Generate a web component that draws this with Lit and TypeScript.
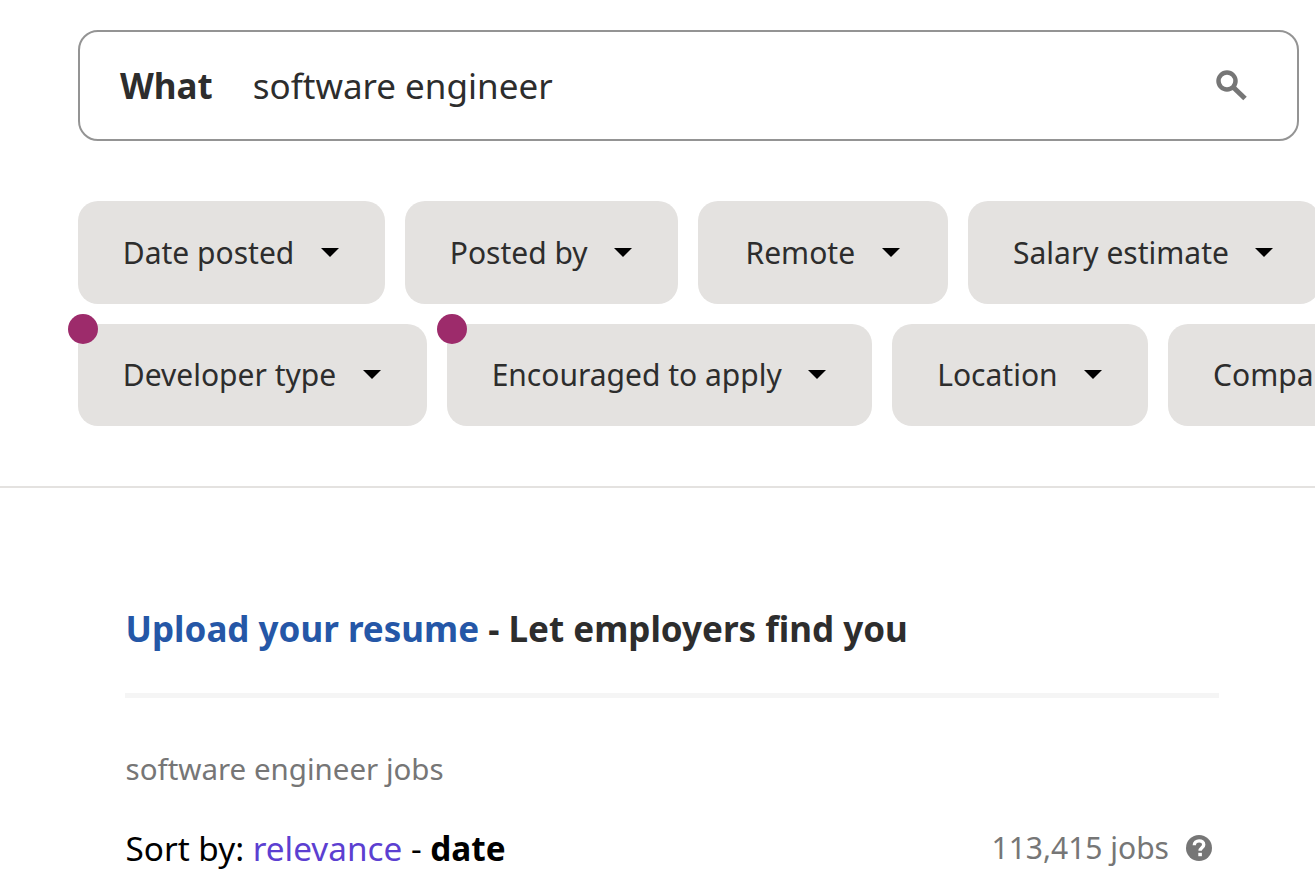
import { LitElement, html, css } from "lit";
import { customElement } from "lit/decorators.js";

const row1 = ["Date posted", "Posted by", "Remote", "Salary estimate"];
const row2: [string, boolean][] = [["Developer type", true], ["Encouraged to apply", true], ["Location", false], ["Company", false]];

@customElement("app-root")
export class AppRoot extends LitElement {
  static styles = css`
    :host { display: block; width: 1315px; height: 887px; overflow: hidden; background: #fff; font-family: "Noto Sans", sans-serif; color: #2d2d2d; }
    .top { padding: 30px 0 0 78px; height: 488px; box-sizing: border-box; border-bottom: 2px solid #e4e2e0; }
    .search { width: 1221px; height: 111px; box-sizing: border-box; border: 2px solid #949494; border-radius: 20px; display: flex; align-items: center; padding: 0 49px 0 40px; font-size: 35px; margin-bottom: 60px; }
    .what { font-weight: 700; margin-right: 40px; }
    .q { flex: 1; }
    .search svg { width: 32px; height: 32px; display: block; flex: none; }
    .rows { display: flex; flex-direction: column; gap: 20px; }
    .row { display: flex; gap: 20px; }
    .chip { position: relative; flex: none; height: 103px; min-width: 250px; box-sizing: border-box; padding: 0 46.200px 0 44.800px; background: #e4e2e0; border-radius: 20px; display: flex; align-items: center; justify-content: center; gap: 26.500px; font-size: 30px; white-space: nowrap; }
    .row + .row .chip { height: 102px; padding-bottom: 2px; }
    .caret { width: 0; height: 0; border-left: 9px solid transparent; border-right: 9px solid transparent; border-top: 9px solid #000; }
    .dot { position: absolute; left: -10px; top: -10px; width: 30px; height: 30px; border-radius: 50%; background: #9d2b6b; }
    .main { padding: 0 96px 0 125px; }
    .upload { font-size: 35px; font-weight: 700; line-height: 46px; padding: 118px 0 0 0.500px; }
    .upload a { color: #2557a7; }
    .rule { height: 5px; background: #f5f5f5; margin-top: 41px; }
    .title { font-size: 29.500px; color: #767676; line-height: 40px; margin-top: 51px; padding-left: 0.500px; }
    .sort { display: flex; justify-content: space-between; align-items: center; margin-top: 37px; padding-left: 0.500px; color: #000; font-size: 33.300px; line-height: 44px; }
    .sort a { color: #5c3fd1; }
    .count { display: flex; align-items: center; gap: 17px; color: #767676; font-size: 30px; padding-right: 7px; }
    .count svg { width: 26px; height: 26px; display: block; flex: none; }
  `;

  render() {
    return html`
      <div class="top">
        <div class="search">
          <span class="what">What</span>
          <span class="q">software engineer</span>
          <svg viewBox="0 0 32 32" fill="none" stroke="#767676"><circle cx="11" cy="11" r="8.500" stroke-width="4.500"/><path d="M17.500 17.500 29 28.500" stroke-width="5"/></svg>
        </div>
        <div class="rows">
          <div class="row">${row1.map((t) => html`<div class="chip">${t}<span class="caret"></span></div>`)}</div>
          <div class="row">${row2.map(([t, d]) => html`<div class="chip">${d ? html`<span class="dot"></span>` : ""}${t}<span class="caret"></span></div>`)}</div>
        </div>
      </div>
      <div class="main">
        <div class="upload"><a>Upload your resume</a> - Let employers find you</div>
        <div class="rule"></div>
        <div class="title">software engineer jobs</div>
        <div class="sort">
          <span>Sort by: <a>relevance</a> - <b>date</b></span>
          <span class="count">113,415 jobs
            <svg viewBox="0 0 26 26"><circle cx="13" cy="13" r="13" fill="#767676"/><path d="M8.300 10.200c0-2.600 2.100-4.300 4.800-4.300s4.600 1.500 4.600 3.800c0 3-3.600 3.100-3.600 6" fill="none" stroke="#fff" stroke-width="3.400"/><rect x="12.300" y="17.800" width="3.600" height="3.400" fill="#fff"/></svg>
          </span>
        </div>
      </div>
    `;
  }
}
